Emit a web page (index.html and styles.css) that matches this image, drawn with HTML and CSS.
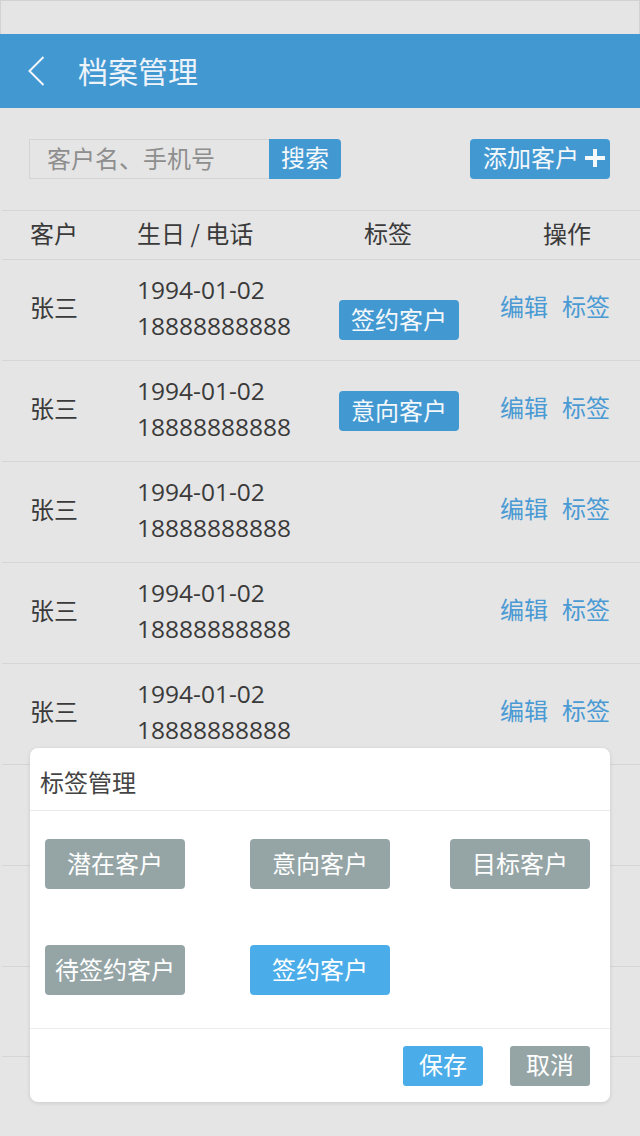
FILE: index.html
```html
<!DOCTYPE html>
<html lang="zh-CN">
<head>
<meta charset="utf-8">
<title>档案管理</title>
<link rel="stylesheet" href="styles.css">
</head>
<body>
<div class="status"></div>
<header class="nav">
  <svg class="back" width="18" height="30" viewBox="0 0 18 30"><polyline points="15.5,1 1.5,15 15.5,29" fill="none" stroke="#f2f6fa" stroke-width="2"/></svg>
  <h1 class="title">档案管理</h1>
</header>
<section class="toolbar">
  <div class="search">
    <input class="search-input" type="text" placeholder="客户名、手机号">
    <button class="search-btn">搜索</button>
  </div>
  <button class="add-btn">添加客户<svg class="plus" width="20" height="18" viewBox="0 0 20 18"><rect x="0" y="7" width="20" height="4" fill="#f4f8fb"/><rect x="8" y="0" width="4" height="18" fill="#f4f8fb"/></svg></button>
</section>
<div class="table">
  <div class="thead">
    <span>客户</span>
    <span>生日 / 电话</span>
    <span>标签</span>
    <span>操作</span>
  </div>
  <div class="row">
    <span class="name">张三</span>
    <div class="dates"><div>1994-01-02</div><div>18888888888</div></div>
    <div class="tagcell"><span class="chip chip-low">签约客户</span></div>
    <div class="actions"><a>编辑</a><a>标签</a></div>
  </div>
  <div class="row">
    <span class="name">张三</span>
    <div class="dates"><div>1994-01-02</div><div>18888888888</div></div>
    <div class="tagcell"><span class="chip">意向客户</span></div>
    <div class="actions"><a>编辑</a><a>标签</a></div>
  </div>
  <div class="row">
    <span class="name">张三</span>
    <div class="dates"><div>1994-01-02</div><div>18888888888</div></div>
    <div class="tagcell"></div>
    <div class="actions"><a>编辑</a><a>标签</a></div>
  </div>
  <div class="row">
    <span class="name">张三</span>
    <div class="dates"><div>1994-01-02</div><div>18888888888</div></div>
    <div class="tagcell"></div>
    <div class="actions"><a>编辑</a><a>标签</a></div>
  </div>
  <div class="row">
    <span class="name">张三</span>
    <div class="dates"><div>1994-01-02</div><div>18888888888</div></div>
    <div class="tagcell"></div>
    <div class="actions"><a>编辑</a><a>标签</a></div>
  </div>
  <div class="row"></div>
  <div class="row"></div>
  <div class="row row-last"></div>
</div>

<div class="modal">
  <div class="modal-head">标签管理</div>
  <div class="modal-body">
    <span class="tag">潜在客户</span>
    <span class="tag">意向客户</span>
    <span class="tag">目标客户</span>
    <span class="tag">待签约客户</span>
    <span class="tag tag-on">签约客户</span>
  </div>
  <div class="modal-foot">
    <button class="btn btn-save">保存</button>
    <button class="btn btn-cancel">取消</button>
  </div>
</div>
</body>
</html>
```
FILE: styles.css
```css
html, body {
  margin: 0;
  padding: 0;
}
body {
  width: 640px;
  height: 1136px;
  position: relative;
  overflow: hidden;
  background: #e5e5e5;
  color: #3a3a3a;
  font-family: "Open Sans", "Noto Sans CJK SC", sans-serif;
  font-size: 24px;
}

.status {
  height: 34px;
  box-sizing: border-box;
  border: 1px solid #d2d2d2;
  border-bottom: none;
}

.nav {
  height: 74px;
  background: #4299d2;
  display: flex;
  align-items: center;
  padding-left: 28px;
}
.back {
  display: block;
  margin-right: 32px;
}
.title {
  margin: 0 0 2px;
  font-size: 30px;
  font-weight: normal;
  line-height: 1;
  color: #eef3f9;
  font-family: "Noto Sans CJK SC", sans-serif;
}

.toolbar {
  height: 102px;
  box-sizing: border-box;
  display: flex;
  align-items: center;
  justify-content: space-between;
  padding: 0 30px 0 29px;
}
.search {
  display: flex;
  height: 40px;
}
.search-input {
  width: 240px;
  height: 40px;
  box-sizing: border-box;
  border: 1px solid #d4d4d4;
  border-right: none;
  background: transparent;
  padding: 0 0 4px 17px;
  margin: 0;
  font-family: "Noto Sans CJK SC", sans-serif;
  font-size: 24px;
  color: #333;
  outline: none;
}
.search-input::placeholder {
  color: #8e8e8e;
}
.search-btn {
  width: 72px;
  height: 40px;
  box-sizing: border-box;
  border: none;
  margin: 0;
  padding: 0 0 4px;
  background: #4299d2;
  color: #f4f8fb;
  border-radius: 0 4px 4px 0;
  font-family: "Noto Sans CJK SC", sans-serif;
  font-size: 24px;
  line-height: 36px;
}
.add-btn {
  width: 140px;
  height: 40px;
  border: none;
  margin: 0;
  padding: 0 0 4px 13px;
  box-sizing: border-box;
  display: flex;
  align-items: center;
  gap: 6px;
  background: #4299d2;
  color: #f4f8fb;
  border-radius: 4px;
  font-family: "Noto Sans CJK SC", sans-serif;
  font-size: 24px;
  line-height: 36px;
}
.plus {
  display: block;
  margin-top: 2px;
}

.table {
  border-top: 1px solid #d6d6d6;
  margin-left: 2px;
}
.thead {
  height: 43px;
  padding-bottom: 5px;
  border-bottom: 1px solid #d6d6d6;
  display: grid;
  grid-template-columns: 107px 227px 179px 1fr;
  align-items: center;
  padding-left: 28px;
  font-family: "Noto Sans CJK SC", sans-serif;
  color: #3a3a3a;
}
.row {
  height: 100px;
  border-bottom: 1px solid #d6d6d6;
  display: grid;
  grid-template-columns: 107px 202px 120px 1fr;
  align-items: center;
  padding-left: 28px;
}
.row-last {
  height: 89px;
}
.name {
  font-family: "Noto Sans CJK SC", sans-serif;
  margin-bottom: 8px;
}
.dates {
  font-family: "Open Sans", sans-serif;
  font-size: 24.5px;
  line-height: 36px;
  color: #3a3a3a;
  margin-bottom: 4px;
}
.tagcell {
  display: flex;
  justify-content: center;
}
.chip {
  width: 120px;
  height: 40px;
  box-sizing: border-box;
  padding-bottom: 4px;
  border-radius: 4px;
  background: #4299d2;
  color: #f4f8fb;
  display: flex;
  align-items: center;
  justify-content: center;
  font-family: "Noto Sans CJK SC", sans-serif;
}
.chip-low {
  margin-top: 20px;
}
.actions {
  justify-self: end;
  padding-right: 30px;
  margin-bottom: 9px;
  display: flex;
  gap: 14px;
  color: #4a9ad4;
  font-family: "Noto Sans CJK SC", sans-serif;
}

.modal {
  position: absolute;
  left: 30px;
  top: 748px;
  width: 580px;
  background: #fff;
  border-radius: 8px;
  box-shadow: 0 1px 4px rgba(0, 0, 0, 0.12);
  font-family: "Noto Sans CJK SC", sans-serif;
}
.modal-head {
  height: 63px;
  box-sizing: border-box;
  padding: 4px 0 0 10px;
  display: flex;
  align-items: center;
  border-bottom: 1px solid #e9e9e9;
  color: #444;
}
.modal-body {
  display: grid;
  grid-template-columns: 205px 200px 140px;
  row-gap: 56px;
  padding: 28px 0 33px 15px;
  border-bottom: 1px solid #ececec;
}
.tag {
  width: 140px;
  height: 50px;
  box-sizing: border-box;
  padding-bottom: 4px;
  border-radius: 4px;
  background: #95a5a6;
  color: #fff;
  display: flex;
  align-items: center;
  justify-content: center;
}
.tag-on {
  background: #4aade9;
}
.modal-foot {
  display: flex;
  justify-content: flex-end;
  gap: 27px;
  padding: 17px 20px 16px 0;
}
.btn {
  width: 80px;
  height: 40px;
  box-sizing: border-box;
  border: none;
  margin: 0;
  padding: 0 0 4px;
  border-radius: 3px;
  color: #fff;
  font-family: "Noto Sans CJK SC", sans-serif;
  font-size: 24px;
  line-height: 36px;
}
.btn-save {
  background: #4aade9;
}
.btn-cancel {
  background: #95a5a6;
}
```
